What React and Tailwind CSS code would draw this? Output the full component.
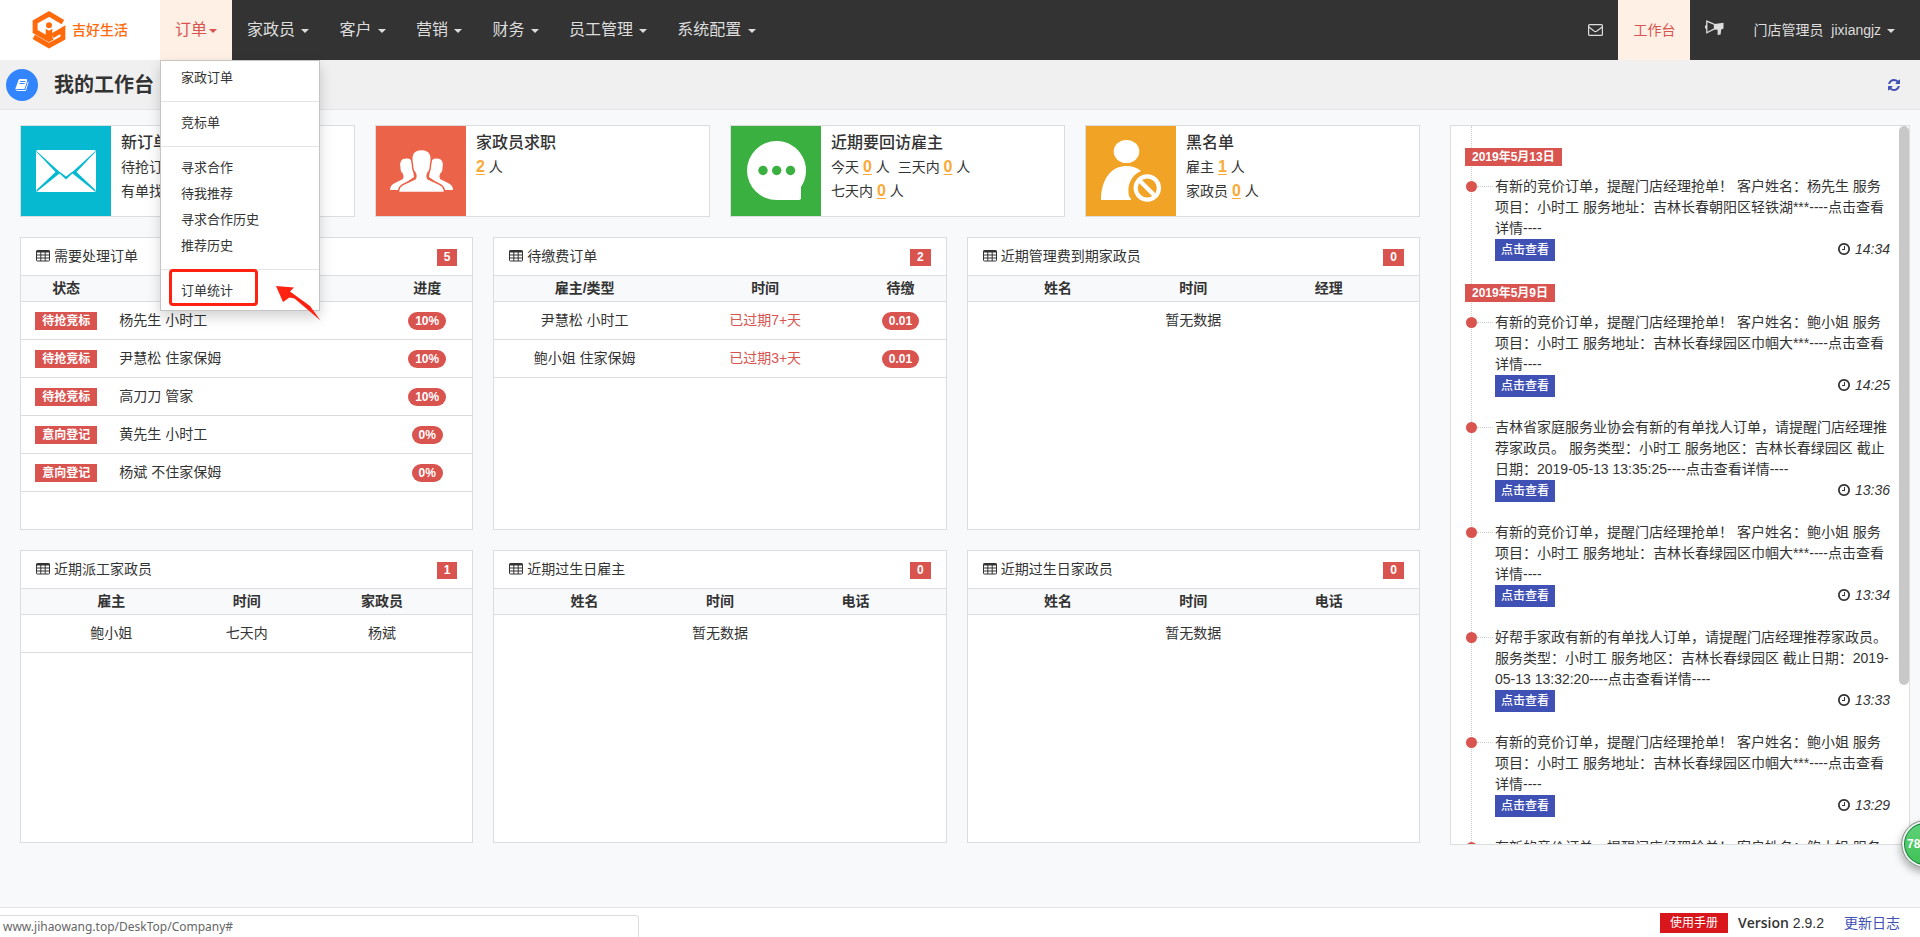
const navItems = ['家政员', '客户', '营销', '财务', '员工管理', '系统配置'];

const orderMenu = [['家政订单'], ['竞标单'], ['寻求合作', '待我推荐', '寻求合作历史', '推荐历史'], ['订单统计']];

const bidText = (name, place) =>
  `有新的竞价订单，提醒门店经理抢单！ 客户姓名：${name} 服务项目：小时工 服务地址：${place}***----点击查看详情----`;

const timeline = [
  {
    date: '2019年5月13日',
    items: [{ text: bidText('杨先生', '吉林长春朝阳区轻铁湖'), time: '14:34' }],
  },
  {
    date: '2019年5月9日',
    items: [
      { text: bidText('鲍小姐', '吉林长春绿园区巾帼大'), time: '14:25' },
      {
        text: '吉林省家庭服务业协会有新的有单找人订单，请提醒门店经理推荐家政员。 服务类型：小时工 服务地区：吉林长春绿园区 截止日期：2019-05-13 13:35:25----点击查看详情----',
        time: '13:36',
      },
      { text: bidText('鲍小姐', '吉林长春绿园区巾帼大'), time: '13:34' },
      {
        text: '好帮手家政有新的有单找人订单，请提醒门店经理推荐家政员。 服务类型：小时工 服务地区：吉林长春绿园区 截止日期：2019-05-13 13:32:20----点击查看详情----',
        time: '13:33',
      },
      { text: bidText('鲍小姐', '吉林长春绿园区巾帼大'), time: '13:29' },
      { text: bidText('鲍小姐', '吉林长春绿园区巾帼大'), time: '13:27' },
    ],
  },
];

/* Icons */

function Logo() {
  return (
    <svg viewBox="0 0 100 115" className="w-[34px] h-[38px]" fill="none" stroke="#ff6a0a" strokeWidth="15">
      <path d="M92 34 L50 9 L8 33 V62 L50 86 L60 80" />
      <path d="M4 78 L50 105 L92 82 V56 L60 75" />
      <circle cx="50" cy="43" r="9" fill="#ff6a0a" stroke="none" />
      <path d="M40 54 L50 60 L60 54 V84 H40 Z" fill="#ff6a0a" stroke="none" />
    </svg>
  );
}

function BookIcon() {
  return (
    <svg viewBox="0 0 1792 1792" className="w-[14px] h-[14px]" fill="currentColor">
      <path d="M1703 478q40 57 18 129l-275 906q-19 64-76.5 107.5t-122.5 43.5h-923q-77 0-148.5-53.5t-99.5-131.5q-24-67-2-127 0-4 3-27t4-37q1-8-3-21.5t-3-19.5q2-11 8-21t16.5-23.5 16.5-23.5q23-38 45-91.5t30-91.5q3-10 .5-30t-.5-28q3-11 17-28t17-23q21-36 42-92t25-90q1-9-2.5-32t.5-28q4-13 22-30.5t22-22.5q19-26 42.5-84.5t27.5-96.5q1-8-3-25.5t-2-26.5q2-8 9-18t18-23 17-21q8-12 16.5-30.5t15-35 16-36 19.5-32 26.5-23.5 36-11.5 47.5 5.5l-1 3q38-9 51-9h761q74 0 114 56t18 130l-274 906q-36 119-71.5 153.5t-128.5 34.5h-869q-27 0-38 15-11 16-1 43 24 70 144 70h923q29 0 56-15.5t35-41.5l300-987q7-22 5-57 38 15 59 43zm-1064 2q-4 13 2 22.5t20 9.5h608q13 0 25.5-9.5t16.5-22.5l21-64q4-13-2-22.5t-20-9.5h-608q-13 0-25.5 9.5t-16.5 22.5zm-83 256q-4 13 2 22.5t20 9.5h608q13 0 25.5-9.5t16.5-22.5l21-64q4-13-2-22.5t-20-9.5h-608q-13 0-25.5 9.5t-16.5 22.5z" />
    </svg>
  );
}

function RefreshIcon() {
  return (
    <svg viewBox="0 0 1536 1536" className="w-3 h-3" fill="currentColor">
      <path d="M1511 928q0 5-1 7-64 268-268 434.5t-478 166.5q-146 0-282.5-55t-243.5-157l-129 129q-19 19-45 19t-45-19-19-45v-448q0-26 19-45t45-19h448q26 0 45 19t19 45-19 45l-137 137q71 66 161 102t187 36q134 0 250-65t186-179q11-17 53-117 8-23 30-23h192q13 0 22.5 9.5t9.5 22.5zm25-800v448q0 26-19 45t-45 19h-448q-26 0-45-19t-19-45 19-45l138-138q-148-137-349-137-134 0-250 65t-186 179q-11 17-53 117-8 23-30 23h-199q-13 0-22.5-9.5t-9.5-22.5v-7q65-268 270-434.5t480-166.5q146 0 284 55.5t245 156.5l130-129q19-19 45-19t45 19 19 45z" />
    </svg>
  );
}

function ClockIcon() {
  return (
    <svg viewBox="128 128 1536 1536" className="w-3 h-3" fill="currentColor">
      <path d="M1024 544v448q0 14-9 23t-23 9h-320q-14 0-23-9t-9-23v-64q0-14 9-23t23-9h224v-352q0-14 9-23t23-9h64q14 0 23 9t9 23zm416 352q0-148-73-273t-198-198-273-73-273 73-198 198-73 273 73 273 198 198 273 73 273-73 198-198 73-273zm224 0q0 209-103 385.5t-279.5 279.5-385.5 103-385.5-103-279.5-279.5-103-385.5 103-385.5 279.5-279.5 385.5-103 385.5 103 279.5 279.5 103 385.5z" />
    </svg>
  );
}

function TableIcon() {
  return (
    <svg viewBox="0 0 14 12" className="w-[14px] h-3" fill="none" stroke="currentColor">
      <rect x="0.5" y="0.5" width="13" height="10.5" rx="0.8" />
      <path d="M0.5 1.5 H13.5" strokeWidth="2" />
      <path d="M1 5 H13 M1 8 H13 M4.8 2 V11 M9.2 2 V11" />
    </svg>
  );
}

function MailIcon() {
  return (
    <svg viewBox="0 0 15 12" className="w-[15px] h-3" fill="none" stroke="currentColor" strokeWidth="1.2">
      <rect x="0.6" y="0.6" width="13.8" height="10.8" rx="1" />
      <path d="M0.8 3 L6.4 7.3 Q7.5 8 8.6 7.3 L14.2 3" />
    </svg>
  );
}

function HornIcon() {
  return (
    <svg viewBox="0 0 19 16" className="w-[19px] h-4" fill="currentColor">
      <path d="M1.8 1.2 L9.5 4.5 V8.8 L1.8 12.8 Z" fill="none" stroke="currentColor" strokeWidth="1.3" />
      <path d="M0 5.5 H2 V8.5 H0 Z" />
      <path d="M9.5 4 L18.5 2.8 V8.4 L16.2 9.4 L15.6 14.6 L12.6 15 V9.8 L9.5 9.4 Z" />
    </svg>
  );
}

function Caret() {
  return (
    <span className="inline-block w-0 h-0 ml-[2px] align-middle border-x-4 border-t-4 border-x-transparent border-t-current" />
  );
}

function EnvelopeArt() {
  return (
    <svg viewBox="0 0 90 90" className="w-full h-full">
      <rect x="15" y="24" width="60" height="42" rx="2" fill="#fff" />
      <path
        d="M15.500 25 L37 44.500 L45 50.500 L53 44.500 L74.500 25 L74.500 26 L55.500 46 L74.500 64 L74 65.500 L51.500 47.500 L45 53.500 L38.500 47.500 L16 65.500 L15.500 64 L34.500 46 L15.500 26 Z"
        fill="#06b9d1"
      />
    </svg>
  );
}

function PeopleArt() {
  return (
    <svg viewBox="0 0 90 90" className="w-full h-full" fill="#fff">
      <path d="M14 64 Q14 59 19 57 L27 53 Q28.500 50 26.500 47 Q24.500 46 24.500 42 Q22.500 32 31 32.500 Q36 32.500 36 38 L38 51 L25 60 Q22.500 62 22 64 Z" />
      <path d="M77 64 Q77 59 72 57 L64 53 Q62.500 50 64.500 47 Q66.500 46 66.500 42 Q68.500 32 60 32.500 Q55 32.500 55 38 L53 51 L66 60 Q68.500 62 69 64 Z" />
      <path
        d="M22.500 66.500 Q22.500 60 28 58 L39 53 Q41 50 38.500 46 Q36.500 44 36.500 39 Q33 23.500 45.500 23.500 Q58 23.500 54.500 39 Q54.500 44 52.500 46 Q50 50 52 53 L63 58 Q68.500 60 68.500 66.500 Z"
        stroke="#eb6449"
        strokeWidth="1.500"
      />
    </svg>
  );
}

function ChatArt() {
  return (
    <svg viewBox="0 0 90 90" className="w-full h-full">
      <path d="M45.500 15 A29.500 29.500 0 0 1 70 61 V72 Q70 74 68 74 H45.500 A29.500 29.500 0 0 1 45.500 15 Z" fill="#fff" />
      <g fill="#39b03f">
        <circle cx="32" cy="44.500" r="4.700" />
        <circle cx="45.700" cy="44.500" r="4.700" />
        <circle cx="59.500" cy="44.500" r="4.700" />
      </g>
    </svg>
  );
}

function BlockedArt() {
  return (
    <svg viewBox="0 0 90 90" className="w-full h-full" fill="#fff">
      <ellipse cx="40.500" cy="25.500" rx="12.800" ry="11.500" />
      <path d="M15 74 C15 54 25 40 40 40 Q49 40 55 45 C44 50 41 60 43 70 L45 73 V74 Z" />
      <circle cx="61.300" cy="62" r="11.600" fill="none" stroke="#fff" strokeWidth="4.200" />
      <path d="M53 54 L69.500 70.500" stroke="#fff" strokeWidth="4.200" />
    </svg>
  );
}

/* Header */

function OrderDropdown() {
  return (
    <div className="absolute left-0 top-full z-20 w-40 pt-1 pb-[6px] bg-white border border-[#c4c4c4] shadow-[0_6px_12px_rgba(0,0,0,0.175)] text-[13px] leading-[26px] text-[#333]">
      {orderMenu.map((group, index) => (
        <ul key={group[0]} className={index > 0 ? 'mt-[10px] pt-2 border-t border-[#e2e2e2]' : ''}>
          {group.map((label) => (
            <li key={label}>
              <a href="#" className="block px-5">
                {label}
              </a>
            </li>
          ))}
        </ul>
      ))}
      {/* Highlight around the last entry, with its arrow */}
      <div className="absolute left-2 bottom-1 w-[89px] h-[37px] border-3 border-[#ff2211] rounded-sm" />
      <svg viewBox="0 0 46 36" className="absolute left-[114px] bottom-[-11px] w-[46px] h-9" fill="#ff2211">
        <path d="M1 1 L19 2.500 L15 6.500 L35 21 L45.500 35.500 L19.500 13.500 L14.500 12.500 L8 17 Z" />
      </svg>
    </div>
  );
}

function Header() {
  return (
    <header className="flex h-[60px] bg-[#333] text-[#ddd]">
      <a href="#" className="flex items-center w-40 pl-8 gap-[6px] bg-white text-[#ff6a0a] text-sm font-medium">
        <Logo />
        吉好生活
      </a>
      <nav className="flex text-base">
        <div className="relative">
          <button className="h-full px-[15px] bg-[#fff0e5] text-[#d9534f]">
            订单
            <Caret />
          </button>
          <OrderDropdown />
        </div>
        {navItems.map((item) => (
          <button key={item} className="px-[15px]">
            {item} <Caret />
          </button>
        ))}
      </nav>
      <div className="flex ml-auto pr-[10px] text-sm">
        <button className="px-[15px]" aria-label="消息">
          <MailIcon />
        </button>
        <a href="#" className="flex items-center px-[15px] bg-[#fff0e5] text-[#d9534f]">
          工作台
        </a>
        <button className="pl-[15px] pr-[14px] pb-1" aria-label="公告">
          <HornIcon />
        </button>
        <button className="px-[15px]">
          <span className="mr-1">门店管理员</span> jixiangjz <Caret />
        </button>
      </div>
    </header>
  );
}

function TitleBar() {
  return (
    <div className="flex items-center h-[50px] pl-[6px] pr-5 bg-[#f0f0f0] border-b border-[#e2e4e6]">
      <span className="flex items-center justify-center w-8 h-8 rounded-full bg-[#3385ff] text-white">
        <BookIcon />
      </span>
      <h1 className="ml-4 text-xl font-bold">我的工作台</h1>
      <button className="ml-auto text-[#3f51b5]" aria-label="刷新">
        <RefreshIcon />
      </button>
    </div>
  );
}

/* Summary cards */

function Count({ label, value }) {
  return (
    <span className="mr-2">
      {label ? `${label} ` : ''}
      <a href="#" className="text-base font-bold text-[#faa937] underline underline-offset-2">
        {value}
      </a>
      {' 人'}
    </span>
  );
}

function SummaryCard({ title, color, art, children }) {
  return (
    <section className="flex bg-white border border-[#dcdddf]">
      <div className={`w-[90px] h-[90px] shrink-0 ${color}`}>{art}</div>
      <div className="pl-[10px] pt-[5px] leading-6 whitespace-nowrap overflow-hidden">
        <h2 className="text-base leading-6 font-medium">{title}</h2>
        {children}
      </div>
    </section>
  );
}

/* Panels */

function Tag({ children }) {
  return (
    <span className="inline-block px-[7px] bg-[#d9534f] text-white text-xs leading-[18px] font-bold align-middle">
      {children}
    </span>
  );
}

function Pill({ children }) {
  return (
    <span className="inline-block px-[7px] rounded-full bg-[#d9534f] text-white text-xs leading-[18px] font-bold align-middle">
      {children}
    </span>
  );
}

function Panel({ title, count, columns, rows = [] }) {
  return (
    <section className="h-[293px] bg-white border border-[#dcdddf]">
      <div className="flex items-center h-[38px] px-[15px] pb-[2px] border-b border-[#dcdddf]">
        <TableIcon />
        <h2 className="ml-1">{title}</h2>
        <span className="ml-auto mt-1 px-[7px] bg-[#d9534f] text-white text-xs leading-[17px] font-bold">{count}</span>
      </div>
      <table className="w-full table-fixed text-center">
        <thead>
          <tr className="h-[25px] bg-[#f8f9fb] border-b border-[#dcdddf]">
            {columns.map((column) => (
              <th key={column.label} className={`p-0 leading-5 font-bold ${column.width}`}>
                {column.label}
              </th>
            ))}
          </tr>
        </thead>
        <tbody>
          {rows.length === 0 && (
            <tr className="h-[38px]">
              <td colSpan={columns.length} className="p-0 leading-5">
                暂无数据
              </td>
            </tr>
          )}
          {rows.map((row) => (
            <tr key={row.id} className="h-[38px] border-b border-[#dcdddf]">
              {row.cells.map((cell, index) => (
                <td key={index} className={`p-0 leading-5 ${columns[index].cell || ''}`}>
                  {cell}
                </td>
              ))}
            </tr>
          ))}
        </tbody>
      </table>
    </section>
  );
}

const equalColumns = (first, second, third) => [
  { label: first, width: 'w-[40%]' },
  { label: second, width: 'w-[20%]' },
  { label: third, width: 'w-[40%]' },
];

const pendingOrders = [
  ['待抢竞标', '杨先生 小时工', '10%'],
  ['待抢竞标', '尹慧松 住家保姆', '10%'],
  ['待抢竞标', '高刀刀 管家', '10%'],
  ['意向登记', '黄先生 小时工', '0%'],
  ['意向登记', '杨斌 不住家保姆', '0%'],
].map(([status, name, progress]) => ({
  id: name,
  cells: [<Tag>{status}</Tag>, name, <Pill>{progress}</Pill>],
}));

const unpaidOrders = [
  ['尹慧松 小时工', '已过期7+天', '0.01'],
  ['鲍小姐 住家保姆', '已过期3+天', '0.01'],
].map(([name, overdue, amount]) => ({
  id: name,
  cells: [name, <span className="text-[#d9534f]">{overdue}</span>, <Pill>{amount}</Pill>],
}));

const panels = [
  {
    title: '需要处理订单',
    count: 5,
    columns: [
      { label: '状态', width: 'w-1/5' },
      { label: '', width: 'w-3/5', cell: 'text-left pl-2' },
      { label: '进度', width: 'w-1/5' },
    ],
    rows: pendingOrders,
  },
  {
    title: '待缴费订单',
    count: 2,
    columns: [
      { label: '雇主/类型', width: 'w-[40%]' },
      { label: '时间', width: 'w-[40%]' },
      { label: '待缴', width: 'w-[20%]' },
    ],
    rows: unpaidOrders,
  },
  { title: '近期管理费到期家政员', count: 0, columns: equalColumns('姓名', '时间', '经理') },
  {
    title: '近期派工家政员',
    count: 1,
    columns: equalColumns('雇主', '时间', '家政员'),
    rows: [{ id: 'dispatch', cells: ['鲍小姐', '七天内', '杨斌'] }],
  },
  { title: '近期过生日雇主', count: 0, columns: equalColumns('姓名', '时间', '电话') },
  { title: '近期过生日家政员', count: 0, columns: equalColumns('姓名', '时间', '电话') },
];

/* Timeline */

function TimelineItem({ item }) {
  return (
    <li className="relative pl-[30px] pb-5">
      <span className="absolute left-3 top-[10px] w-4 border-t border-dotted border-[#ccc]" />
      <span className="absolute left-px top-[5px] w-[11px] h-[11px] rounded-full bg-[#d9534f]" />
      <p className="leading-[21px] break-words">{item.text}</p>
      <div className="flex items-center justify-between h-[22px]">
        <button className="h-[22px] px-[6px] bg-[#3f51b5] text-white text-xs font-medium">点击查看</button>
        <span className="flex items-center gap-[5px] pb-[2px] italic">
          <ClockIcon />
          {item.time}
        </span>
      </div>
    </li>
  );
}

function Timeline() {
  return (
    <aside className="relative h-[720px] overflow-hidden bg-white border border-[#dcdddf]">
      <div className="relative pt-[22px] pl-[14px] pr-[19px]">
        <span className="absolute left-5 inset-y-0 border-l border-dotted border-[#ccc]" />
        {timeline.map((group) => (
          <section key={group.date} className="relative mb-[3px]">
            <h3 className="w-fit px-[7px] bg-[#d9534f] text-white text-xs leading-[18px] font-bold">{group.date}</h3>
            <ul className="mt-[10px]">
              {group.items.map((item) => (
                <TimelineItem key={item.time} item={item} />
              ))}
            </ul>
          </section>
        ))}
      </div>
      <div className="absolute right-0 top-0 w-[10px] h-[559px] rounded-full bg-[#c8c8c8]" />
    </aside>
  );
}

function Footer() {
  return (
    <footer className="flex items-center h-[30px] pr-5 bg-white border-t border-[#e2e4e6]">
      <a href="#" className="ml-auto px-[10px] bg-[#d9161c] text-white text-xs leading-5">
        使用手册
      </a>
      <span className="ml-[10px]">
        <b className="font-['Open_Sans',sans-serif] font-semibold">Version</b> 2.9.2
      </span>
      <a href="#" className="ml-5 text-[#3f51b5]">
        更新日志
      </a>
    </footer>
  );
}

function App() {
  return (
    <div className="relative flex flex-col min-h-screen overflow-hidden bg-[#f8f9fb] text-[#333] text-sm font-['Liberation_Sans','Noto_Sans_CJK_SC',sans-serif]">
      <Header />
      <TitleBar />
      <main className="flex flex-1 pt-[15px]">
        <div className="w-3/4 px-5">
          <div className="grid grid-cols-4 gap-5">
            <SummaryCard title="新订单" color="bg-[#06b9d1]" art={<EnvelopeArt />}>
              <p>
                <Count label="待抢订单" value={3} />
              </p>
              <p>
                <Count label="有单找人" value={0} />
              </p>
            </SummaryCard>
            <SummaryCard title="家政员求职" color="bg-[#eb6449]" art={<PeopleArt />}>
              <p>
                <Count value={2} />
              </p>
            </SummaryCard>
            <SummaryCard title="近期要回访雇主" color="bg-[#39b03f]" art={<ChatArt />}>
              <p>
                <Count label="今天" value={0} />
                <Count label="三天内" value={0} />
              </p>
              <p>
                <Count label="七天内" value={0} />
              </p>
            </SummaryCard>
            <SummaryCard title="黑名单" color="bg-[#f1a325]" art={<BlockedArt />}>
              <p>
                <Count label="雇主" value={1} />
              </p>
              <p>
                <Count label="家政员" value={0} />
              </p>
            </SummaryCard>
          </div>
          <div className="grid grid-cols-3 gap-5 mt-5">
            {panels.map((panel) => (
              <Panel key={panel.title} {...panel} />
            ))}
          </div>
        </div>
        <div className="w-1/4 px-[10px]">
          <Timeline />
        </div>
      </main>
      <Footer />

      {/* Browser link hint */}
      <div className="absolute left-0 bottom-0 w-[639px] h-[22px] pl-[3px] bg-white border-t border-r border-[#dcdddf] rounded-tr text-xs leading-[22px] text-[#666] font-['Noto_Sans',sans-serif]">
        www.jihaowang.top/DeskTop/Company#
      </div>

      {/* Floating speed ball */}
      <div className="absolute right-[-29px] bottom-[69px] flex items-center w-12 h-12 pl-[5px] rounded-full border border-[#999] bg-linear-to-b from-[#5fd47a] to-[#3fbf55] shadow-[inset_0_0_0_2px_#f2f2f2,inset_0_0_0_3px_#14803a,0_4px_8px_rgba(0,0,0,0.35)] text-xs font-bold text-white">
        78%
      </div>
    </div>
  );
}

export default App;
